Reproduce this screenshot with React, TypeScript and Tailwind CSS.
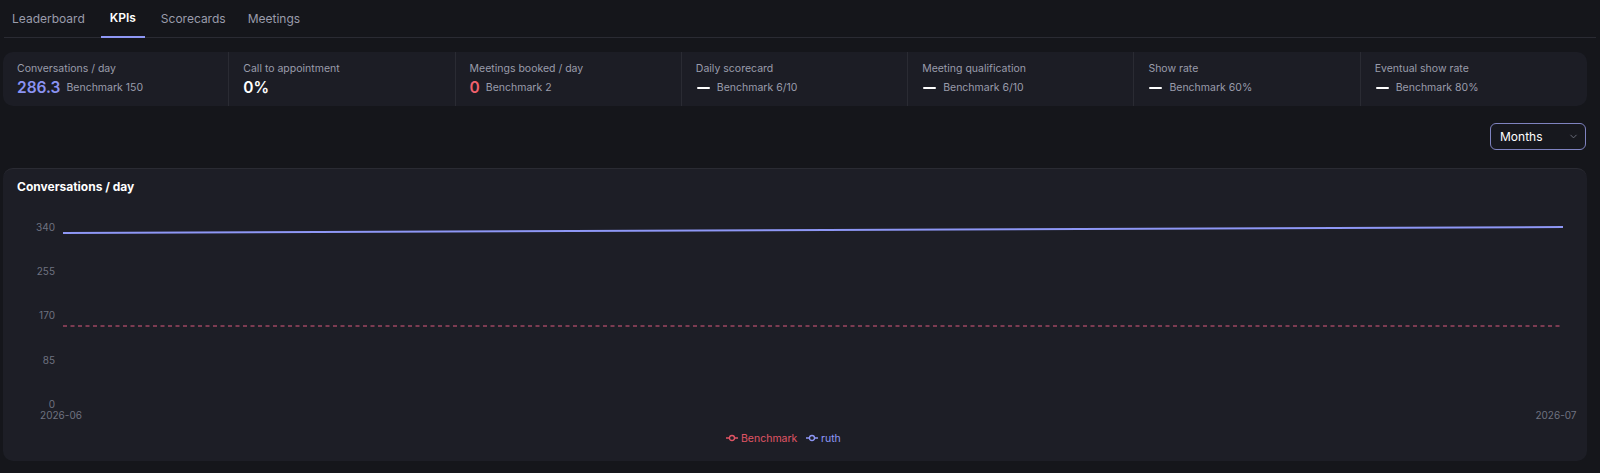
import { ChevronDown } from 'lucide-react';

const kpis = [
  { label: 'Conversations / day', value: '286.3', valueClass: 'text-[#8b93f2]', bench: 'Benchmark 150' },
  { label: 'Call to appointment', value: '0%', valueClass: 'text-white', bench: '' },
  { label: 'Meetings booked / day', value: '0', valueClass: 'text-[#f0616d]', bench: 'Benchmark 2' },
  { label: 'Daily scorecard', value: null, valueClass: '', bench: 'Benchmark 6/10' },
  { label: 'Meeting qualification', value: null, valueClass: '', bench: 'Benchmark 6/10' },
  { label: 'Show rate', value: null, valueClass: '', bench: 'Benchmark 60%' },
  { label: 'Eventual show rate', value: null, valueClass: '', bench: 'Benchmark 80%' },
];

const tabs = ['Leaderboard', 'KPIs', 'Scorecards', 'Meetings'];

function Chart() {
  const ticks = [
    { v: '340', y: 29 },
    { v: '255', y: 73 },
    { v: '170', y: 117 },
    { v: '85', y: 162 },
    { v: '0', y: 206 },
  ];
  return (
    <svg width="1584" height="262" className="mt-[3px] block" style={{ fontFamily: 'Inter, sans-serif' }}>
      {ticks.map((t) => (
        <text key={t.v} x="52" y={t.y + 3} textAnchor="end" fontSize="10" fill="#6f7280">
          {t.v}
        </text>
      ))}
      <text x="58" y="220" textAnchor="middle" fontSize="10" fill="#6f7280">2026-06</text>
      <text x="1553" y="220" textAnchor="middle" fontSize="10" fill="#6f7280">2026-07</text>
      <line x1="60" y1="127" x2="1560" y2="127" stroke="#9c4560" strokeWidth="1.5" strokeDasharray="4 3.5" />
      <line x1="60" y1="34" x2="1560" y2="28" stroke="#8e97f5" strokeWidth="2" />
      <g transform="translate(723,239)">
        <line x1="0" y1="0" x2="12" y2="0" stroke="#e05565" strokeWidth="1.5" />
        <circle cx="6" cy="0" r="2.5" fill="#1d1e26" stroke="#e05565" strokeWidth="1.3" />
        <text x="15" y="3.5" fontSize="10.5" fill="#e05565">Benchmark</text>
        <line x1="80" y1="0" x2="92" y2="0" stroke="#8e97f5" strokeWidth="1.5" />
        <circle cx="86" cy="0" r="2.5" fill="#1d1e26" stroke="#8e97f5" strokeWidth="1.3" />
        <text x="95" y="3.5" fontSize="10.5" fill="#8e97f5">ruth</text>
      </g>
    </svg>
  );
}

export default function App() {
  return (
    <div className="w-[1600px] h-[473px] bg-[#15161b] font-['Inter',sans-serif] overflow-hidden">
      <div className="mx-[4px] flex h-[38px] items-stretch gap-[14px] border-b border-[#2a2b33] pl-[4px]">
        {tabs.map((t) => (
          <div
            key={t}
            className={
              t === 'KPIs'
                ? '-mx-[2px] -mb-px flex items-center border-b-2 border-[#8e97f5] px-[9px] text-[12px] font-semibold text-white'
                : 'flex items-center px-[4px] text-[12px] text-[#9a9cab]'
            }
          >
            {t}
          </div>
        ))}
      </div>

      <div className="mx-[3px] mt-[14px] grid w-[1584px] grid-cols-7 rounded-[10px] bg-[#1c1d25]">
        {kpis.map((k, i) => (
          <div
            key={k.label}
            className={
              'flex h-[54px] flex-col justify-center gap-[1px] px-[14px] ' +
              (i < kpis.length - 1 ? 'border-r border-[#2a2b33]' : '')
            }
          >
            <div className="text-[10.5px] text-[#9a9cab] leading-[16px]">{k.label}</div>
            <div className="flex items-center gap-[6px] leading-[20px]">
              {k.value !== null ? (
                <span className={'text-[15.5px] font-semibold ' + k.valueClass}>{k.value}</span>
              ) : (
                <span className="mx-[1px] inline-block h-[2px] w-[13px] rounded bg-white" />
              )}
              {k.bench && <span className="text-[10.5px] text-[#9a9cab]">{k.bench}</span>}
            </div>
          </div>
        ))}
      </div>

      <div className="mt-[17px] flex justify-end pr-[14px]">
        <div className="flex h-[27px] w-[96px] items-center justify-between rounded-[6px] border border-[#7f83c0] bg-[#17181e] pl-[9px] pr-[6px]">
          <span className="text-[12px] text-white">Months</span>
          <ChevronDown size={11} color="#6f7280" />
        </div>
      </div>

      <div className="mx-[3px] mt-[18px] w-[1584px] rounded-[10px] border-t border-[#2a2b33] bg-[#1d1e26]">
        <div className="px-[14px] pt-[9px] text-[12px] font-bold text-white leading-[18px]">Conversations / day</div>
        <Chart />
      </div>
    </div>
  );
}
